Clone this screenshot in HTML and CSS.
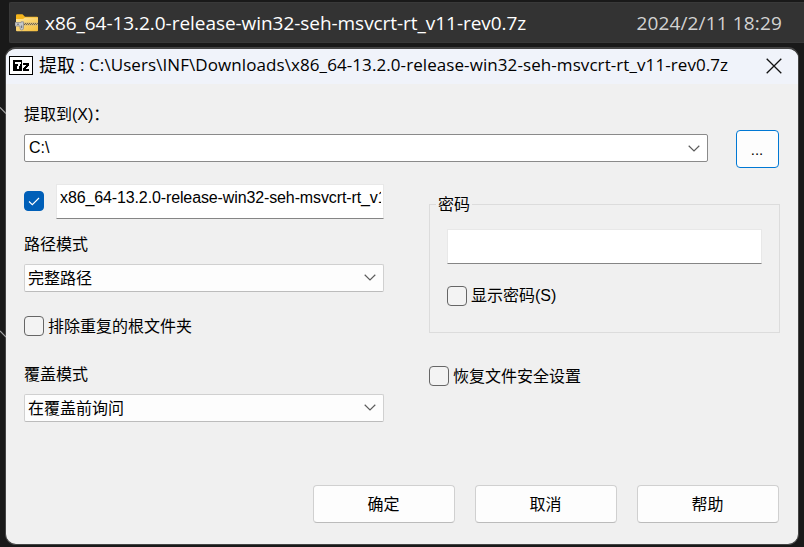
FILE: index.html
```html
<!DOCTYPE html>
<html lang="zh-CN">
<head>
<meta charset="utf-8">
<title>提取</title>
<link rel="stylesheet" href="styles.css">
</head>
<body>
<svg class="backdrop" width="6" height="547" viewBox="0 0 6 547"><path d="M0 107.5l6 6M0 331l6 6" stroke="#a5a5a5" stroke-width="1.2" fill="none"/></svg>
<div class="file-row">
  <svg class="folder" width="24" height="18" viewBox="0 0 24 18">
    <defs><linearGradient id="g" x1="0" y1="0" x2="1" y2="1"><stop offset="0" stop-color="#ffe59a"/><stop offset="1" stop-color="#f4bd3b"/></linearGradient></defs>
    <path d="M1 1.500Q1 .3 2.200.3H7.500L10 2.700H22Q23 2.700 23 3.700V8H1Z" fill="#f5b51b"/>
    <path d="M1 5H8L10 3.500H23V16.200Q23 17.200 22 17.200H2Q1 17.200 1 16.200Z" fill="url(#g)"/>
    <path d="M8 10H23" stroke="#d5b878" stroke-width="3"/>
    <path d="M8 9.500H23" stroke="#74684f" stroke-width="1" stroke-dasharray="1 1"/>
    <path d="M9 10.500H23" stroke="#74684f" stroke-width="1" stroke-dasharray="1 1"/>
    <path d="M0 8.500H6V7.800H8.500V14Q8.500 16 6.700 16Q5 16 5 14V12H0Z" fill="#c6c8ca" stroke="#8d8e91" stroke-width=".8"/>
    <path d="M2 10.200H4M6.700 11.500V14" stroke="#66676b" stroke-width="1"/>
  </svg>
  <span class="file-name">x86_64-13.2.0-release-win32-seh-msvcrt-rt_v11-rev0.7z</span>
  <span class="file-date">2024/2/11 18:29</span>
</div>
<main class="dialog">
  <header class="titlebar">
    <svg class="logo" width="24" height="19" viewBox="0 0 24 19" shape-rendering="crispEdges">
      <path d="M0 0H24V19H0Z"/><path d="M1 1H23V18H1Z" fill="#fff"/><path d="M4 4H13V15H4Z"/>
      <path d="M6 6h6v2h-1v2h-1v3H8v-3h1V8H6z" fill="#fff"/>
      <path d="M14 7h6v3h-1v1h-1v1h-1v1h3v2h-6v-3h1v-1h1v-1h1V9h-3z"/>
    </svg>
    <h1 class="title"><span class="title-cn">提取</span><span class="title-path">: C:\Users\INF\Downloads\x86_64-13.2.0-release-win32-seh-msvcrt-rt_v11-rev0.7z</span></h1>
    <svg class="close" width="16" height="16" viewBox="0 0 16 16"><path d="M.7.7l14.600 14.600M15.300.7L.7 15.300" stroke="#111" stroke-width="1.300"/></svg>
  </header>
  <div class="client">
    <div class="label">提取到<span class="latin">(X)</span>：</div>
    <div class="target">
      <div class="combo combo-edit"><span class="latin">C:\</span><svg class="chevron" width="12" height="7" viewBox="0 0 12 7"><path d="M.7.8L6 6L11.300.8"/></svg></div>
      <div class="button browse latin">...</div>
    </div>
    <div class="columns">
      <section class="left">
        <div class="subfolder"><span class="check checked"><svg width="12" height="9" viewBox="0 0 12 9"><path d="M1 4.500L4.300 7.700L11 1" fill="none" stroke="#fff" stroke-width="1.100"/></svg></span><div class="input name"><div class="name-text latin">x86_64-13.2.0-release-win32-seh-msvcrt-rt_v11</div></div></div>
        <div class="label path-label">路径模式</div>
        <div class="combo">完整路径<svg class="chevron" width="12" height="7" viewBox="0 0 12 7"><path d="M.7.8L6 6L11.300.8"/></svg></div>
        <div class="option root-option"><span class="check"></span><span class="option-text">排除重复的根文件夹</span></div>
        <div class="label over-label">覆盖模式</div>
        <div class="combo">在覆盖前询问<svg class="chevron" width="12" height="7" viewBox="0 0 12 7"><path d="M.7.8L6 6L11.300.8"/></svg></div>
      </section>
      <section class="right">
        <div class="group">
          <div class="legend">密码</div>
          <div class="input password"></div>
          <div class="option"><span class="check"></span><span class="option-text">显示密码<span class="latin">(S)</span></span></div>
        </div>
        <div class="option restore"><span class="check"></span><span class="option-text">恢复文件安全设置</span></div>
      </section>
    </div>
    <footer class="actions"><div class="button">确定</div><div class="button">取消</div><div class="button">帮助</div></footer>
  </div>
</main>
</body>
</html>
```
FILE: styles.css
```css
* { box-sizing: border-box; }
body {
  margin: 0;
  width: 804px;
  height: 547px;
  overflow: hidden;
  padding-top: 2px;
  background: #191919;
  color: #000;
  font: 16px/20px "Liberation Sans", "Noto Sans CJK SC", sans-serif;
}
.backdrop { position: absolute; left: 0; top: 0; }
.file-row {
  display: flex;
  align-items: center;
  height: 41px;
  margin-left: 9px;
  padding: 0 22px 0 5px;
  border: 1px solid #393939;
  border-right: 0;
  border-radius: 2px 0 0 2px;
  background: #333;
  font-family: "Open Sans", sans-serif;
  font-size: 19px;
  white-space: nowrap;
}
.folder { flex: none; margin-right: 6px; }
.file-name { color: #fff; letter-spacing: -.05px; }
.file-date { margin-left: auto; color: #d2d2d2; letter-spacing: .15px; }
.dialog {
  width: 794px;
  height: 498px;
  margin: 4px 0 0 5px;
  border: 1px solid #444;
  border-top-width: 2px;
  border-radius: 11px;
  background: #f0f0f0;
  overflow: hidden;
}
.titlebar {
  display: flex;
  align-items: center;
  height: 35px;
  padding: 0 16px 2px 3px;
  background: #f0f3fa;
}
.logo { flex: none; }
.title {
  display: flex;
  margin: 0 0 1px 6px;
  font: 400 17px/24px "Open Sans", "Noto Sans CJK SC", sans-serif;
  white-space: nowrap;
}
.title-cn { width: 41px; font: 18px/23px "Noto Sans CJK SC", sans-serif; }
.title-path { letter-spacing: .08px; }
.close { flex: none; margin-left: auto; }
.client { padding: 19px 18px 0; font-family: "Noto Sans CJK SC", sans-serif; }
.latin { font-family: "Liberation Sans", sans-serif; }
.label { height: 20px; }
.target { display: flex; align-items: center; justify-content: space-between; height: 38px; margin-top: 7px; }
.combo {
  display: flex;
  align-items: center;
  justify-content: space-between;
  width: 360px;
  height: 28px;
  padding: 0 7px 2px 3px;
  border: 1px solid #d0d0d0;
  border-bottom-color: #bcbcbc;
  border-radius: 2px;
  background: #fdfdfd;
}
.combo-edit { width: 684px; padding: 0 7px 0 4px; border-color: #8a8a8a; background: #fff; margin-bottom: 2px; }
.chevron { margin-top: 1px; }
.chevron path { fill: none; stroke: #5c5c5c; stroke-width: 1.2; }
.button {
  display: flex;
  align-items: center;
  justify-content: center;
  width: 142px;
  height: 38px;
  padding: 0 1px 2px 0;
  border: 1px solid #d0d0d0;
  border-bottom-color: #bbb;
  border-radius: 4px;
  background: #fdfdfd;
}
.browse { width: 43px; border-color: #0078d4; padding: 2px 1px 0 0; margin-right: 1px; font-size: 15px; }
.columns { display: flex; justify-content: space-between; margin-top: 16px; }
.left { width: 360px; }
.right { width: 351px; padding-top: 20px; }
.subfolder { display: flex; align-items: center; justify-content: space-between; height: 35px; }
.input { border: 1px solid #e8e8e8; border-bottom-color: #858585; background: #fff; height: 35px; }
.name { width: 328px; padding: 3px 2px 0 3px; }
.name-text { overflow: hidden; white-space: nowrap; letter-spacing: -.12px; }
.check { display: flex; align-items: center; justify-content: center; flex: none; width: 20px; height: 20px; border: 1px solid #666; border-radius: 4px; background: #f3f3f3; }
.checked { border-color: #005fb8; background: #005fb8; margin-bottom: 1px; }
.option { display: flex; align-items: center; height: 20px; white-space: nowrap; }
.option .check { margin-right: 4px; }
.option-text { padding-bottom: 2px; }
.path-label { margin: 14px 0 11px; }
.root-option { margin-top: 24px; }
.over-label { margin: 27px 0 11px; }
.group { height: 129px; padding: 0 18px 0 17px; border: 1px solid #dcdcdc; }
.legend { width: 36px; height: 20px; margin: -12px 0 0 -11px; padding-left: 2px; background: #f0f0f0; }
.password { width: 315px; margin: 16px 0 22px; }
.restore { margin-top: 33px; }
.actions { display: flex; justify-content: flex-end; gap: 20px; margin: 63px 1px 0 0; }
```
